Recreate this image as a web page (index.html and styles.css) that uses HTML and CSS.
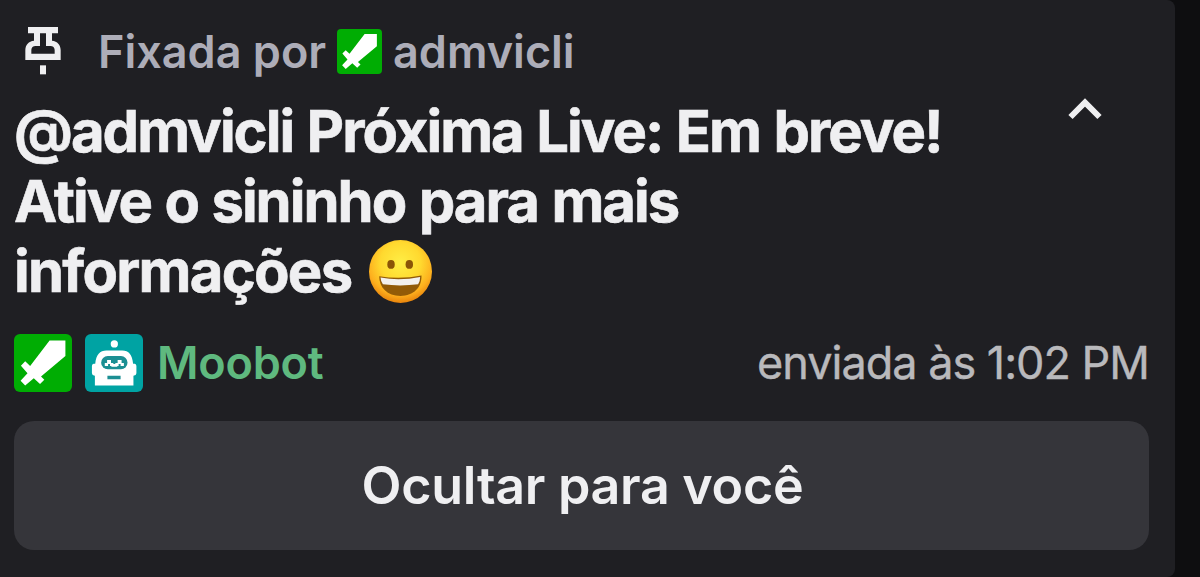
FILE: index.html
```html
<!DOCTYPE html>
<html lang="pt-BR">

<head>
    <meta charset="UTF-8">
    <meta name="viewport" content="width=device-width, initial-scale=1.0">
    <title>Mensagem fixada</title>
    <link rel="stylesheet" href="styles.css">
</head>

<body>
    <svg class="defs" width="0" height="0">
        <symbol id="sword" viewBox="0 0 176 176">
            <path fill="#fff" d="M108 20H156V67L82 129L92 139L79 152L60 134L34 156L20 142L41 119L21 96L34 83L49 97Z"/>
        </symbol>
    </svg>

    <div class="card">
        <div class="pinned-by">
            <svg class="pin" viewBox="0 0 114 150">
                <path fill="#efeff1" fill-rule="evenodd" d="M12 3H102V22H84V44C100 46 110 56 110 72V102H4V72C4 56 14 46 30 44V22H12ZM48 22V60H35C27 60 22 65 22 72V83H92V72C92 65 87 60 79 60H66V22Z"/>
                <path fill="#efeff1" d="M48 118H66V145H48Z"/>
            </svg>
            <span class="pinned-label">Fixada por</span>
            <svg class="badge small mod"><use href="#sword"/></svg>
            <span class="pinned-name">admvicli</span>
        </div>

        <div class="content">
            <p class="message">
                <span class="line line1">@admvicli Próxima Live: Em breve!</span>
                <span class="line line2">Ative o sininho para mais</span>
                <span class="line line3">informações
                    <svg class="emoji" viewBox="0 0 186 186">
                        <defs>
                            <radialGradient id="face" cx=".5" cy=".36" r=".64">
                                <stop offset="0" stop-color="#ffee45"/>
                                <stop offset=".5" stop-color="#ffd92f"/>
                                <stop offset=".8" stop-color="#fdb01e"/>
                                <stop offset="1" stop-color="#e8830c"/>
                            </radialGradient>
                        </defs>
                        <circle cx="93" cy="93" r="93" fill="url(#face)"/>
                        <ellipse cx="65" cy="72" rx="11" ry="13" fill="#8b5407"/>
                        <ellipse cx="119" cy="72" rx="11" ry="13" fill="#8b5407"/>
                        <path fill="#925b07" d="M30 107Q92 117 155 105C156 140 132 165 93 165S30 140 30 107Z"/>
                        <path fill="#f3f1ee" d="M34 111Q92 121 151 109Q151 122 145 131Q92 137 41 131Q35 124 34 111Z"/>
                    </svg>
                </span>
            </p>
            <svg class="chevron" viewBox="0 0 34 22">
                <path fill="none" stroke="#efeff1" stroke-width="6" d="M2.5 19L17 4.5L31.5 19"/>
            </svg>
        </div>

        <div class="meta">
            <svg class="badge mod"><use href="#sword"/></svg>
            <svg class="badge bot" viewBox="0 0 176 176">
                <circle cx="89" cy="30" r="11" fill="#fff"/>
                <path fill="#fff" d="M65 50H113C133 50 143 63 146 90H151Q156 91 156 97V119Q156 125 147 127V156H30V127Q21 125 21 119V97Q21 91 26 90H31C34 63 45 50 65 50Z"/>
                <rect x="49" y="67" width="80" height="40" rx="20" fill="#1b8f93"/>
                <path fill="#fff" d="M67 79H79V88H86V97H76V91H70V97H60V88H67ZM99 79H111V88H118V97H108V91H102V97H92V88H99ZM80 91H98V99H80Z"/>
                <path fill="#1b8f93" d="M68 127H108V137H68Z"/>
            </svg>
            <span class="author">Moobot</span>
            <span class="sent">enviada às 1:02 PM</span>
        </div>

        <button class="hide">Ocultar para você</button>
    </div>
</body>

</html>
```

FILE: styles.css
```css
* {
    box-sizing: border-box;
}

body {
    margin: 0;
    background-color: #0e0e10;
    font-family: Inter, "Liberation Sans", sans-serif;
    overflow: hidden;
}

.defs {
    position: absolute;
}

.card {
    width: 1175px;
    height: 577px;
    padding: 23px 26px 0 14px;
    background-color: #1f1f23;
    border-radius: 0 8px 8px 0;
    color: #efeff1;
}

.pinned-by {
    display: flex;
    align-items: center;
    height: 56px;
    padding-left: 10px;
    font-size: 45px;
    font-weight: 600;
    color: #adadb8;
}

.pin {
    width: 38px;
    height: 50px;
    margin: 0 36px 0 0;
}

.pinned-label {
    width: 239px;
    white-space: nowrap;
}

.badge {
    width: 58px;
    height: 58px;
    border-radius: 6px;
    flex-shrink: 0;
}

.badge.small {
    width: 45px;
    height: 45px;
    border-radius: 4px;
    margin-right: 11px;
}

.mod {
    background-color: #00ad03;
}

.bot {
    background-color: #00a3a3;
    margin: 0 14px 0 13px;
}

.content {
    display: flex;
    justify-content: space-between;
    margin-top: 17px;
}

.message {
    margin: 0;
    font-size: 58px;
    font-weight: 700;
    line-height: 70px;
    -webkit-text-stroke: 0.6px #efeff1;
}

.line {
    display: flex;
    align-items: center;
    height: 70px;
    letter-spacing: -2px;
    word-spacing: 1.7px;
    white-space: nowrap;
}

.line3 {
    letter-spacing: -1.75px;
}

.emoji {
    width: 63px;
    height: 63px;
    margin-left: 18px;
}

.chevron {
    width: 34px;
    height: 22px;
    margin: 2px 47px 0 0;
}

.meta {
    display: flex;
    align-items: center;
    height: 59px;
    margin-top: 27px;
    font-size: 45px;
}

.author {
    font-weight: 600;
    letter-spacing: -0.2px;
    color: #5fb97f;
}

.sent {
    margin-left: auto;
    letter-spacing: -1px;
    color: #b9b9bc;
    -webkit-text-stroke: 0.4px #b9b9bc;
}

.hide {
    display: block;
    width: 1135px;
    height: 129px;
    margin-top: 29px;
    padding: 0 0 0 2px;
    border: 0;
    border-radius: 20px;
    background-color: #35353a;
    color: #efeff1;
    font-family: inherit;
    font-size: 52px;
    font-weight: 600;
    letter-spacing: -0.3px;
}
```
